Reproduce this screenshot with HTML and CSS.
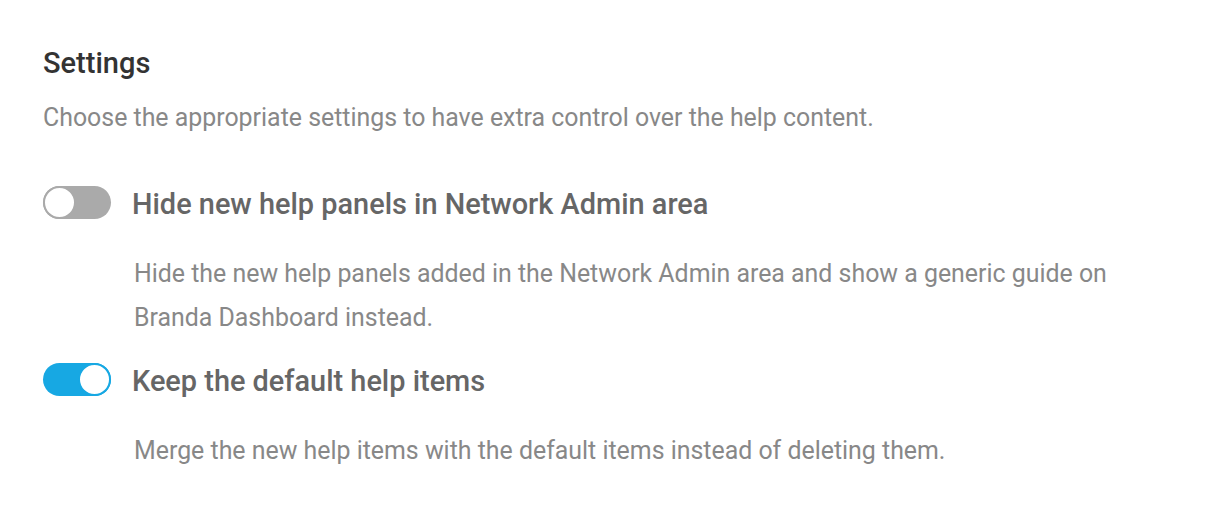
FILE: index.html
```html
<!DOCTYPE html>
<html>
<head>
  <meta charset="UTF-8">
  <link rel="stylesheet" href="styles.css">
</head>
<body>
  <div class="settings-box">
    <h2 class="settings-title">Settings</h2>
    <p class="settings-description">Choose the appropriate settings to have extra control over the help content.</p>

    <div class="settings-options">
      <div class="option">
        <label class="option-row">
          <span class="toggle"><span class="toggle-knob"></span></span>
          <span class="option-label">Hide new help panels in Network Admin area</span>
        </label>
        <p class="option-description">Hide the new help panels added in the Network Admin area and show a generic guide on Branda Dashboard instead.</p>
      </div>

      <div class="option">
        <label class="option-row">
          <span class="toggle on"><span class="toggle-knob"></span></span>
          <span class="option-label">Keep the default help items</span>
        </label>
        <p class="option-description">Merge the new help items with the default items instead of deleting them.</p>
      </div>
    </div>
  </div>
</body>
</html>
```

FILE: styles.css
```css
body {
  margin: 0;
  background: #ffffff;
  font-family: Roboto, "Liberation Sans", sans-serif;
}

.settings-box {
  padding: 43px 43px 0 43px;
}

.settings-title {
  margin: 0;
  font-size: 29px;
  line-height: 40px;
  font-weight: 500;
  color: #333333;
}

.settings-description {
  margin: 13px 0 0 0;
  font-size: 24.9px;
  line-height: 44px;
  color: #888888;
}

.settings-options {
  margin-top: 42px;
}

.option + .option {
  margin-top: 19px;
}

.option-row {
  display: flex;
  align-items: center;
  gap: 21px;
  height: 44px;
  cursor: pointer;
}

.option-label {
  font-size: 28.9px;
  font-weight: 500;
  color: #666666;
}

.option-description {
  margin: 26px 0 0 91px;
  max-width: 1000px;
  font-size: 24.9px;
  line-height: 44px;
  color: #888888;
}

.toggle {
  position: relative;
  flex: none;
  width: 68px;
  height: 33px;
  margin-top: -4px;
  border-radius: 17px;
  background: #aaaaaa;
}

.toggle-knob {
  position: absolute;
  top: 0;
  left: 0;
  width: 29px;
  height: 29px;
  border: 2px solid #aaaaaa;
  border-radius: 50%;
  background: #ffffff;
}

.toggle.on {
  background: #17a8e3;
}

.toggle.on .toggle-knob {
  left: auto;
  right: 0;
  border-color: #17a8e3;
}
```
